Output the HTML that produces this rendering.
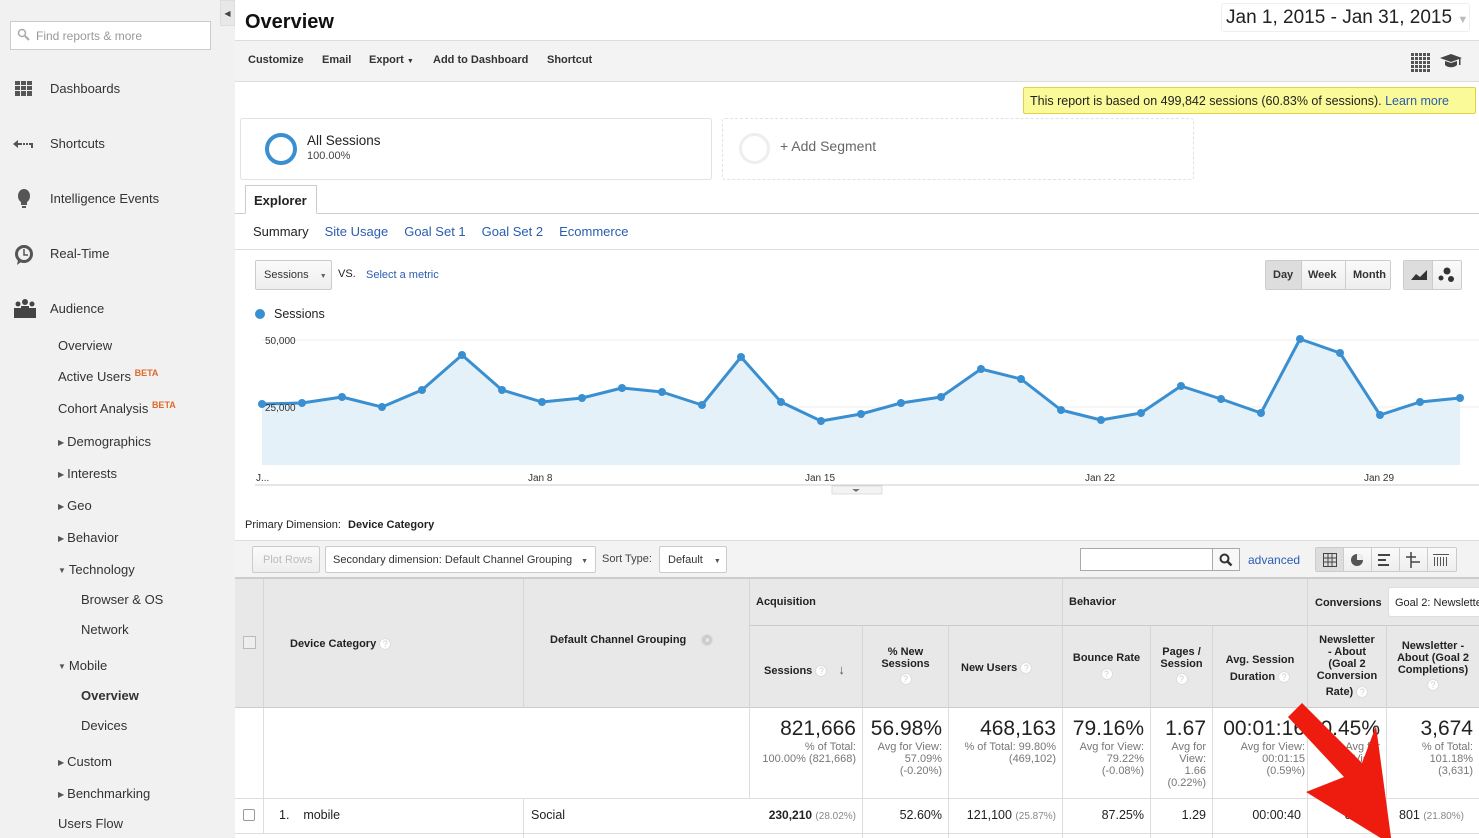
<!DOCTYPE html>
<html><head><meta charset="utf-8"><style>
*{box-sizing:border-box;margin:0;padding:0}
body{width:1479px;height:838px;overflow:hidden;background:#fff;font-family:"Liberation Sans",Arial,sans-serif;color:#222;position:relative;font-size:13px}
.a{position:absolute}
#side{left:0;top:0;width:235px;height:838px;background:#f1f1f1}
.nav{position:absolute;left:50px;font-size:13px;color:#333}
.sub{position:absolute;left:58px;font-size:13px;color:#333}
.sub2{position:absolute;left:81px;font-size:13px;color:#333}
.tri{font-size:8px;color:#555;margin-right:3px;vertical-align:1px}
.beta{color:#dd6a2a;font-size:9px;font-weight:bold;vertical-align:5px}
.lnk{color:#2a5db0}
.th{position:absolute;background:#e8e8e8;border-right:1px solid #d6d6d6;border-bottom:1px solid #ccc;font-weight:bold;font-size:11px;color:#222}
.c{position:absolute;border-right:1px solid #ddd;text-align:right;font-size:11px;color:#777;padding-right:6px;line-height:12px}
.big{font-size:21px;color:#222;line-height:24px}
.q{display:inline-block;width:12px;height:12px;border-radius:6px;border:1px solid #ddd;color:#ccc;font-size:9px;text-align:center;line-height:11px;font-weight:normal;background:#fff;vertical-align:middle}
.btn{position:absolute;border:1px solid #ccc;border-radius:2px;background:linear-gradient(#fafafa,#eee);font-size:11px;color:#333}
</style></head><body>
<div id="side" class="a">
<div class="a" style="left:10px;top:21px;width:201px;height:29px;background:#fff;border:1px solid #ccc;font-size:12px;color:#999;padding:7px 0 0 25px">Find reports &amp; more</div>
<svg class="a" style="left:17px;top:28px" width="14" height="14"><circle cx="5" cy="5" r="3.5" fill="none" stroke="#aaa" stroke-width="1.5"/><path d="M8 8l4 4" stroke="#aaa" stroke-width="2"/></svg>
<svg class="a" style="left:15px;top:81px" width="18" height="16" fill="#555"><rect x="0" y="0" width="5" height="4"/><rect x="6" y="0" width="5" height="4"/><rect x="12" y="0" width="5" height="4"/><rect x="0" y="5" width="5" height="4"/><rect x="6" y="5" width="5" height="4"/><rect x="12" y="5" width="5" height="4"/><rect x="0" y="10" width="5" height="5"/><rect x="6" y="10" width="5" height="5"/><rect x="12" y="10" width="5" height="5"/></svg>
<div class="nav" style="top:81px">Dashboards</div>
<svg class="a" style="left:13px;top:139px" width="22" height="10" fill="#555"><path d="M0 5l5-4v8z"/><rect x="4" y="4" width="5" height="2"/><rect x="10" y="4" width="2" height="2"/><rect x="13" y="4" width="2" height="2"/><rect x="16" y="4" width="4" height="2"/><rect x="18" y="4" width="2" height="5"/></svg>
<div class="nav" style="top:136px">Shortcuts</div>
<svg class="a" style="left:17px;top:189px" width="14" height="22" fill="#555"><ellipse cx="7" cy="7" rx="6" ry="7"/><rect x="4" y="13" width="6" height="3"/><rect x="5" y="17" width="4" height="2"/></svg>
<div class="nav" style="top:191px">Intelligence Events</div>
<svg class="a" style="left:14px;top:244px" width="20" height="22"><circle cx="10" cy="10" r="7.5" fill="none" stroke="#555" stroke-width="3"/><path d="M10 5v6h4" fill="none" stroke="#555" stroke-width="1.5"/><path d="M4 16l-1 5 4-3z" fill="#555"/></svg>
<div class="nav" style="top:246px">Real-Time</div>
<svg class="a" style="left:13px;top:299px" width="24" height="20" fill="#444"><circle cx="5" cy="5" r="2.5"/><circle cx="12" cy="3" r="3"/><circle cx="19" cy="5" r="2.5"/><rect x="1" y="9" width="7" height="10"/><rect x="8" y="7" width="8" height="12"/><rect x="16" y="9" width="7" height="10"/></svg>
<div class="nav" style="top:301px">Audience</div>
<div class="sub" style="top:338px">Overview</div>
<div class="sub" style="top:368px">Active Users <span class="beta">BETA</span></div>
<div class="sub" style="top:400px">Cohort Analysis <span class="beta">BETA</span></div>
<div class="sub" style="top:434px"><span class="tri">▶</span>Demographics</div>
<div class="sub" style="top:466px"><span class="tri">▶</span>Interests</div>
<div class="sub" style="top:498px"><span class="tri">▶</span>Geo</div>
<div class="sub" style="top:530px"><span class="tri">▶</span>Behavior</div>
<div class="sub" style="top:562px"><span class="tri">▼</span>Technology</div>
<div class="sub2" style="top:592px">Browser &amp; OS</div>
<div class="sub2" style="top:622px">Network</div>
<div class="sub" style="top:658px"><span class="tri">▼</span>Mobile</div>
<div class="sub2" style="top:688px;font-weight:bold">Overview</div>
<div class="sub2" style="top:718px">Devices</div>
<div class="sub" style="top:754px"><span class="tri">▶</span>Custom</div>
<div class="sub" style="top:786px"><span class="tri">▶</span>Benchmarking</div>
<div class="sub" style="top:816px">Users Flow</div>
</div>
<div class="a" style="left:220px;top:0;width:15px;height:26px;background:#e8e8e8;border:1px solid #ddd;font-size:8px;color:#444;text-align:center;line-height:26px">◀</div>

<div class="a" style="left:245px;top:11px;font-size:20px;font-weight:bold;color:#111">Overview</div>
<div class="a" style="left:1221px;top:3px;width:249px;height:29px;border:1px solid #eee;border-radius:3px;font-size:19px;color:#222;padding:3px 0 0 4px;white-space:nowrap">Jan 1, 2015 - Jan 31, 2015 <span style="color:#bbb;font-size:11px">▼</span></div>
<div class="a" style="left:235px;top:40px;width:1244px;height:42px;background:#f3f3f3;border-top:1px solid #ddd;border-bottom:1px solid #ddd;font-size:11px;font-weight:bold;color:#333">
<span class="a" style="left:13px;top:13px">Customize</span><span class="a" style="left:87px;top:13px">Email</span><span class="a" style="left:134px;top:13px">Export <span style="font-size:7px">▼</span></span><span class="a" style="left:198px;top:13px">Add to Dashboard</span><span class="a" style="left:312px;top:13px">Shortcut</span>
<svg class="a" style="left:1176px;top:12px" width="20" height="19" fill="#555"><g id="g"><rect x="0" y="0" width="3" height="3"/><rect x="4" y="0" width="3" height="3"/><rect x="8" y="0" width="3" height="3"/><rect x="12" y="0" width="3" height="3"/><rect x="16" y="0" width="3" height="3"/></g><use href="#g" y="4"/><use href="#g" y="8"/><use href="#g" y="12"/><use href="#g" y="16"/></svg>
<svg class="a" style="left:1205px;top:12px" width="22" height="16" fill="#444"><path d="M0 5l11-4 11 4-11 4z"/><path d="M5 8v4c3 3 9 3 12 0v-4l-6 2z"/><rect x="19" y="5" width="1.5" height="7"/></svg>
</div>
<div class="a" style="left:1023px;top:87px;width:453px;height:27px;background:#fafa98;border:1px solid #e2d24a;border-radius:2px;font-size:12.5px;color:#222;padding:6px 0 0 6px">This report is based on 499,842 sessions (60.83% of sessions). <span class="lnk">Learn more</span></div>

<div class="a" style="left:240px;top:118px;width:472px;height:62px;border:1px solid #e2e2e2;border-radius:3px"></div>
<div class="a" style="left:265px;top:133px;width:32px;height:32px;border-radius:16px;border:4px solid #3a8fd0"></div>
<div class="a" style="left:307px;top:133px;font-size:13.5px">All Sessions</div>
<div class="a" style="left:307px;top:150px;font-size:11px;color:#444">100.00%</div>
<div class="a" style="left:722px;top:118px;width:472px;height:62px;border:1px dashed #e2e2e2;border-radius:3px"></div>
<div class="a" style="left:739px;top:133px;width:31px;height:31px;border-radius:16px;border:3px solid #eee"></div>
<div class="a" style="left:780px;top:138px;font-size:14px;color:#666">+ Add Segment</div>

<div class="a" style="left:235px;top:213px;width:1244px;height:1px;background:#ccc"></div>
<div class="a" style="left:245px;top:185px;width:72px;height:29px;background:#fff;border:1px solid #ccc;border-bottom:1px solid #fff;font-weight:bold;font-size:13px;padding:7px 0 0 8px">Explorer</div>
<div class="a" style="left:253px;top:224px;font-size:13px"><span>Summary</span><span class="lnk" style="margin-left:16px">Site Usage</span><span class="lnk" style="margin-left:16px">Goal Set 1</span><span class="lnk" style="margin-left:16px">Goal Set 2</span><span class="lnk" style="margin-left:16px">Ecommerce</span></div>
<div class="a" style="left:235px;top:249px;width:1244px;height:1px;background:#ddd"></div>

<div class="btn" style="left:255px;top:260px;width:77px;height:30px;padding:8px 0 0 8px">Sessions <span style="font-size:7px;margin-left:8px;color:#666">▼</span></div>
<div class="a" style="left:338px;top:268px;font-size:11px">VS.</div>
<div class="a lnk" style="left:366px;top:269px;font-size:11px">Select a metric</div>
<div class="btn" style="left:1265px;top:260px;width:126px;height:30px;font-weight:bold;font-size:11px"><span class="a" style="left:0;top:0;width:36px;height:28px;background:#ddd;border-right:1px solid #ccc;padding:8px 0 0 7px">Day</span><span class="a" style="left:42px;top:8px">Week</span><span class="a" style="left:79px;top:-1px;height:30px;border-left:1px solid #ccc;padding:9px 0 0 7px">Month</span></div>
<div class="btn" style="left:1403px;top:260px;width:59px;height:30px"><span class="a" style="left:0;top:0;width:29px;height:28px;background:#ddd;border-right:1px solid #ccc"></span>
<svg class="a" style="left:6px;top:7px" width="18" height="14"><path d="M1 12l5-6 4 3 7-7v10H1z" fill="#333"/></svg>
<svg class="a" style="left:34px;top:6px" width="18" height="16" fill="#333"><circle cx="9" cy="4" r="3.5"/><circle cx="3" cy="11" r="2.5"/><circle cx="13" cy="12" r="3"/></svg></div>

<div class="a" style="left:255px;top:309px;width:10px;height:10px;border-radius:5px;background:#3a8fd0"></div>
<div class="a" style="left:274px;top:307px;font-size:12.5px">Sessions</div>
<svg class="a" style="left:235px;top:325px" width="1244" height="170">
<line x1="27" y1="15" x2="1244" y2="15" stroke="#eee"/>
<line x1="27" y1="82" x2="1244" y2="82" stroke="#eee"/>
<line x1="20" y1="160" x2="1244" y2="160" stroke="#ccc"/>
<polygon fill="#e5f1f9" points="27,140 27,79 67,78 107,72 147,82 187,65 227,30 267,65 307,77 347,73 387,63 427,67 467,80 506,32 546,77 586,96 626,89 666,78 706,72 746,44 786,54 826,85 866,95 906,88 946,61 986,74 1026,88 1065,14 1105,28 1145,90 1185,77 1225,73 1225,140"/>
<polyline fill="none" stroke="#3a8fd0" stroke-width="3" stroke-linejoin="round" points="27,79 67,78 107,72 147,82 187,65 227,30 267,65 307,77 347,73 387,63 427,67 467,80 506,32 546,77 586,96 626,89 666,78 706,72 746,44 786,54 826,85 866,95 906,88 946,61 986,74 1026,88 1065,14 1105,28 1145,90 1185,77 1225,73"/>
<g fill="#3a8fd0"><circle cx="27" cy="79" r="4"/><circle cx="67" cy="78" r="4"/><circle cx="107" cy="72" r="4"/><circle cx="147" cy="82" r="4"/><circle cx="187" cy="65" r="4"/><circle cx="227" cy="30" r="4"/><circle cx="267" cy="65" r="4"/><circle cx="307" cy="77" r="4"/><circle cx="347" cy="73" r="4"/><circle cx="387" cy="63" r="4"/><circle cx="427" cy="67" r="4"/><circle cx="467" cy="80" r="4"/><circle cx="506" cy="32" r="4"/><circle cx="546" cy="77" r="4"/><circle cx="586" cy="96" r="4"/><circle cx="626" cy="89" r="4"/><circle cx="666" cy="78" r="4"/><circle cx="706" cy="72" r="4"/><circle cx="746" cy="44" r="4"/><circle cx="786" cy="54" r="4"/><circle cx="826" cy="85" r="4"/><circle cx="866" cy="95" r="4"/><circle cx="906" cy="88" r="4"/><circle cx="946" cy="61" r="4"/><circle cx="986" cy="74" r="4"/><circle cx="1026" cy="88" r="4"/><circle cx="1065" cy="14" r="4"/><circle cx="1105" cy="28" r="4"/><circle cx="1145" cy="90" r="4"/><circle cx="1185" cy="77" r="4"/><circle cx="1225" cy="73" r="4"/></g>
<g font-family="Liberation Sans" font-size="10" fill="#333"><text x="30" y="19">50,000</text><text x="30" y="86">25,000</text><text x="21" y="156">J...</text><text x="293" y="156">Jan 8</text><text x="570" y="156">Jan 15</text><text x="850" y="156">Jan 22</text><text x="1129" y="156">Jan 29</text></g>
<rect x="597" y="161" width="50" height="8" fill="#f3f3f3" stroke="#ddd"/><path d="M617 164h8l-4 3z" fill="#777"/>
</svg>

<div class="a" style="left:245px;top:519px;font-size:11px">Primary Dimension: <b style="margin-left:4px">Device Category</b></div>
<div class="a" style="left:235px;top:540px;width:1244px;height:38px;background:#f3f3f3;border-top:1px solid #ddd"></div>
<div class="btn" style="left:252px;top:546px;width:68px;height:27px;color:#bbb;padding:7px 0 0 10px">Plot Rows</div>
<div class="btn" style="left:325px;top:546px;width:271px;height:27px;padding:7px 0 0 7px;background:#fff">Secondary dimension: Default Channel Grouping <span style="font-size:7px;margin-left:6px;color:#555">▼</span></div>
<div class="a" style="left:602px;top:553px;font-size:11px;color:#444">Sort Type:</div>
<div class="btn" style="left:659px;top:546px;width:68px;height:27px;padding:7px 0 0 8px;background:#fff">Default <span style="font-size:7px;margin-left:8px;color:#555">▼</span></div>
<div class="a" style="left:1080px;top:548px;width:160px;height:23px;background:#fff;border:1px solid #aaa"></div>
<div class="a" style="left:1212px;top:548px;width:28px;height:23px;border:1px solid #aaa;background:#f8f8f8"></div>
<svg class="a" style="left:1219px;top:553px" width="14" height="14"><circle cx="5.5" cy="5.5" r="4" fill="none" stroke="#333" stroke-width="2"/><path d="M8.5 8.5l4 4" stroke="#333" stroke-width="2.5"/></svg>
<div class="a lnk" style="left:1248px;top:553px;font-size:12px">advanced</div>
<div class="btn" style="left:1315px;top:547px;width:142px;height:25px">
<span class="a" style="left:0;top:0;width:27px;height:23px;background:#ddd"></span>
<svg class="a" style="left:7px;top:5px" width="14" height="14"><path d="M.5.5h13v13H.5zM.5 5h13M.5 9h13M5 .5v13M9 .5v13" fill="none" stroke="#444"/></svg>
<span class="a" style="left:27px;top:0;width:1px;height:23px;background:#ccc"></span>
<svg class="a" style="left:34px;top:5px" width="14" height="14"><circle cx="7" cy="7" r="6" fill="#555"/><path d="M7 1v6h6A6 6 0 0 0 7 1z" fill="#eee"/></svg>
<span class="a" style="left:55px;top:0;width:1px;height:23px;background:#ccc"></span>
<svg class="a" style="left:62px;top:5px" width="14" height="14" fill="#444"><rect x="0" y="1" width="12" height="2"/><rect x="0" y="6" width="8" height="2"/><rect x="0" y="11" width="11" height="2"/></svg>
<span class="a" style="left:83px;top:0;width:1px;height:23px;background:#ccc"></span>
<svg class="a" style="left:90px;top:4px" width="14" height="16" fill="none" stroke="#444" stroke-width="1.5"><path d="M5 0v16M0 5h10M5 10h9"/></svg>
<span class="a" style="left:111px;top:0;width:1px;height:23px;background:#ccc"></span>
<svg class="a" style="left:117px;top:6px" width="16" height="12" fill="#555"><rect x="0" y="0" width="16" height="1"/><rect x="1" y="3" width="1" height="9"/><rect x="4" y="3" width="1" height="9"/><rect x="7" y="3" width="1" height="9"/><rect x="10" y="3" width="1" height="9"/><rect x="13" y="3" width="1" height="9"/></svg>
</div>

<!-- table header -->
<div class="a" style="left:235px;top:577px;width:1244px;height:2px;background:#ccc"></div>
<div class="th" style="left:235px;top:579px;width:29px;height:129px"><span class="a" style="left:8px;top:57px;width:13px;height:13px;border:1px solid #bbb;background:#eee"></span></div>
<div class="th" style="left:264px;top:579px;width:260px;height:129px;padding:59px 0 0 26px">Device Category <span class="q">?</span></div>
<div class="th" style="left:524px;top:579px;width:226px;height:129px;padding:55px 0 0 26px">Default Channel Grouping <span class="q" style="background:#ccc;color:#fff;margin-left:12px">×</span></div>
<div class="th" style="left:750px;top:579px;width:313px;height:47px;padding:17px 0 0 6px">Acquisition</div>
<div class="th" style="left:1063px;top:579px;width:245px;height:47px;padding:17px 0 0 6px">Behavior</div>
<div class="th" style="left:1308px;top:579px;width:171px;height:47px;border-right:0;padding:18px 0 0 7px">Conversions</div>
<div class="a" style="left:1388px;top:587px;width:95px;height:30px;background:#fff;border:1px solid #ddd;border-radius:3px;font-size:11px;padding:9px 0 0 6px;white-space:nowrap;overflow:hidden">Goal 2: Newsletter</div>
<div class="th" style="left:750px;top:626px;width:113px;height:82px;padding:36px 0 0 14px">Sessions <span class="q">?</span> <span style="margin-left:8px;font-size:13px;color:#555">↓</span></div>
<div class="th" style="left:863px;top:626px;width:86px;height:82px;text-align:center;padding-top:20px;line-height:12px">% New<br>Sessions<br><span class="q" style="margin-top:3px">?</span></div>
<div class="th" style="left:949px;top:626px;width:114px;height:82px;padding:36px 0 0 12px">New Users <span class="q">?</span></div>
<div class="th" style="left:1063px;top:626px;width:88px;height:82px;text-align:center;padding-top:26px;line-height:12px">Bounce Rate<br><span class="q" style="margin-top:4px">?</span></div>
<div class="th" style="left:1151px;top:626px;width:62px;height:82px;text-align:center;padding-top:20px;line-height:12px">Pages /<br>Session<br><span class="q" style="margin-top:3px">?</span></div>
<div class="th" style="left:1213px;top:626px;width:95px;height:82px;text-align:center;padding-top:26px;line-height:17px">Avg. Session<br>Duration <span class="q">?</span></div>
<div class="th" style="left:1308px;top:626px;width:79px;height:82px;text-align:center;padding-top:8px;line-height:12px">Newsletter<br>- About<br>(Goal 2<br>Conversion<br><span style="line-height:20px">Rate) <span class="q">?</span></span></div>
<div class="th" style="left:1387px;top:626px;width:92px;height:82px;text-align:center;padding-top:14px;line-height:12px;border-right:0">Newsletter -<br>About (Goal 2<br>Completions)<br><span class="q" style="margin-top:3px">?</span></div>

<!-- totals -->
<div class="a" style="left:235px;top:708px;width:29px;height:125px;border-right:1px solid #ddd"></div>
<div class="c" style="left:750px;top:708px;width:113px;height:90px;padding-top:9px"><div class="big">821,666</div>% of Total:<br>100.00% (821,668)</div>
<div class="c" style="left:863px;top:708px;width:86px;height:90px;padding-top:9px"><div class="big">56.98%</div>Avg for View:<br>57.09%<br>(-0.20%)</div>
<div class="c" style="left:949px;top:708px;width:114px;height:90px;padding-top:9px"><div class="big">468,163</div>% of Total: 99.80%<br>(469,102)</div>
<div class="c" style="left:1063px;top:708px;width:88px;height:90px;padding-top:9px"><div class="big">79.16%</div>Avg for View:<br>79.22%<br>(-0.08%)</div>
<div class="c" style="left:1151px;top:708px;width:62px;height:90px;padding-top:9px"><div class="big">1.67</div>Avg for<br>View:<br>1.66<br>(0.22%)</div>
<div class="c" style="left:1213px;top:708px;width:95px;height:90px;padding-top:9px;padding-right:2px;white-space:nowrap"><div class="big">00:01:16</div>Avg for View:<br>00:01:15<br>(0.59%)</div>
<div class="c" style="left:1308px;top:708px;width:79px;height:90px;padding-top:9px"><div class="big">0.45%</div>Avg for<br>View:<br>0.44%<br>(1.15%)</div>
<div class="c" style="left:1387px;top:708px;width:92px;height:90px;padding-top:9px;border-right:0"><div class="big">3,674</div>% of Total:<br>101.18%<br>(3,631)</div>
<div class="a" style="left:264px;top:708px;width:486px;height:90px;border-right:1px solid #ddd"></div>
<div class="a" style="left:235px;top:798px;width:1244px;height:1px;background:#ddd"></div>
<!-- row 1 -->
<div class="a" style="left:243px;top:809px;width:12px;height:12px;border:1px solid #999;border-radius:2px;background:#fff"></div>
<div class="a" style="left:279px;top:808px;font-size:12.5px">1.&nbsp;&nbsp;&nbsp; mobile</div>
<div class="a" style="left:523px;top:798px;width:1px;height:40px;background:#ddd"></div>
<div class="a" style="left:531px;top:808px;font-size:12.5px">Social</div>
<div class="c" style="left:750px;top:798px;width:113px;height:40px;padding-top:11px;font-size:12px;color:#222"><b>230,210</b> <span style="color:#888;font-size:10px">(28.02%)</span></div>
<div class="c" style="left:863px;top:798px;width:86px;height:40px;padding-top:11px;font-size:12.5px;color:#222">52.60%</div>
<div class="c" style="left:949px;top:798px;width:114px;height:40px;padding-top:11px;font-size:12.5px;color:#222">121,100 <span style="color:#888;font-size:10px">(25.87%)</span></div>
<div class="c" style="left:1063px;top:798px;width:88px;height:40px;padding-top:11px;font-size:12.5px;color:#222">87.25%</div>
<div class="c" style="left:1151px;top:798px;width:62px;height:40px;padding-top:11px;font-size:12.5px;color:#222">1.29</div>
<div class="c" style="left:1213px;top:798px;width:95px;height:40px;padding-top:11px;font-size:12.5px;color:#222">00:00:40</div>
<div class="c" style="left:1308px;top:798px;width:79px;height:40px;padding-top:11px;font-size:12.5px;color:#222">0.35%</div>
<div class="a" style="left:1399px;top:808px;font-size:12.5px">801 <span style="color:#888;font-size:10px">(21.80%)</span></div>
<div class="a" style="left:235px;top:833px;width:1244px;height:1px;background:#ddd"></div>
<!-- red arrow -->
<svg class="a" style="left:1280px;top:695px" width="120" height="143"><path d="M8 22L22 8L82 68L96 31L112 150L26 97L64 82Z" fill="#ee1c0e"/></svg>
</body></html>
